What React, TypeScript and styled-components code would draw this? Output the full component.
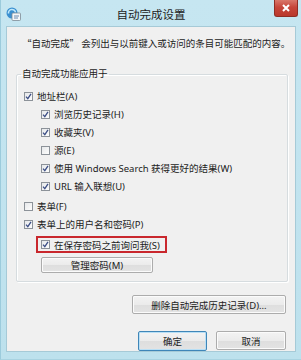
import React, { FC } from 'react';
import styled, { createGlobalStyle } from 'styled-components';

const GlobalStyle = createGlobalStyle`
  html, body {
    margin: 0;
    padding: 0;
    background: #bfe2ee;
  }
  body {
    font-family: "Noto Sans", "Noto Sans CJK SC", sans-serif;
    color: #1c1c1c;
  }
`;

const Window = styled.div`
  width: 301px;
  height: 360px;
  box-sizing: border-box;
  display: flex;
  flex-direction: column;
  background: linear-gradient(180deg, #c6e6f1 0%, #bde1ed 100%);
  border-left: 1px solid #9ccbdc;
  border-bottom: 1px solid #a9d3e1;
`;

const TitleBar = styled.div`
  height: 26px;
  display: grid;
  grid-template-columns: 1fr auto 1fr;
  align-items: start;
`;

const AppIcon = styled.svg`
  justify-self: start;
  margin: 7px 0 0 5px;
`;

const Title = styled.div`
  font-family: "Noto Sans CJK SC", sans-serif;
  font-size: 11.5px;
  line-height: 14px;
  margin-top: 7px;
  color: #222;
`;

const CloseButton = styled.div`
  justify-self: end;
  width: 24px;
  height: 17px;
  margin-right: 3px;
  display: flex;
  align-items: center;
  justify-content: center;
  background: linear-gradient(180deg, #d9776a 0%, #c7463a 45%, #b9382c 100%);
  border: 1px solid #8f2d24;
  border-top: none;
  border-radius: 0 0 3px 3px;
  box-sizing: border-box;
`;

const Client = styled.div`
  flex: 1;
  margin: 0 5px 7px 5px;
  background: #f0f0f0;
  border: 1px solid #a6cad7;
  display: flex;
  flex-direction: column;
  font-family: "Noto Sans", "Noto Sans CJK SC", sans-serif;
  font-size: 9.5px;
`;

const Description = styled.div`
  margin: 9px 0 0 15px;
  line-height: 14px;
  white-space: nowrap;
  font-family: "Noto Sans CJK SC", sans-serif;
`;

const Group = styled.fieldset`
  margin: 18px 7px 0 9px;
  padding: 7px 0 8px 0;
  border: 1px solid #d6dcdf;
  box-shadow: inset 1px 1px 0 #fff, 1px 1px 0 #fff;
  border-radius: 2px;
  display: flex;
  flex-direction: column;
`;

const Legend = styled.legend`
  margin-left: 4px;
  padding: 0 1px;
  line-height: 12px;
  font-size: 9.5px;
`;

const Row = styled.label<{ $indent: number; $gapTop?: number }>`
  display: flex;
  align-items: center;
  height: 18px;
  padding-left: ${(p) => 7 + p.$indent * 17}px;
  margin-top: ${(p) => p.$gapTop ?? 0}px;
  gap: 4px;
  white-space: nowrap;
`;

const Box = styled.span`
  width: 9px;
  height: 9px;
  box-sizing: border-box;
  border: 1px solid #8c9299;
  background: linear-gradient(135deg, #e6e8ea 0%, #fdfdfd 100%);
  display: flex;
  align-items: center;
  justify-content: center;
`;

const Highlight = styled.div`
  align-self: flex-start;
  margin: 3px 0 0 19px;
  border: 2px solid #c9272d;
  padding: 0 5px 0 3px;
  height: 17px;
  box-sizing: border-box;
  display: flex;
  align-items: center;
  gap: 4px;
  white-space: nowrap;
`;

const Button = styled.div<{ $width: number; $default?: boolean }>`
  width: ${(p) => p.$width}px;
  height: ${(p) => (p.$default ? 20 : 19)}px;
  box-sizing: border-box;
  display: flex;
  align-items: center;
  justify-content: center;
  border: 1px solid ${(p) => (p.$default ? '#3f86b8' : '#acacac')};
  border-radius: 2px;
  background: linear-gradient(180deg, #f3f3f3 0%, #ebebeb 50%, #dedede 51%, #e3e3e3 100%);
  box-shadow: inset 0 0 0 1px ${(p) => (p.$default ? '#b9dff5' : '#fbfbfb')};
  white-space: nowrap;
  font-size: 9.5px;
`;

const SmallButton = styled(Button)`
  height: 16px;
  margin: 4px 0 0 24px;
`;

const ButtonRow = styled.div<{ $top: number }>`
  display: flex;
  justify-content: flex-end;
  gap: 9px;
  margin: ${(p) => p.$top}px 9px 0 0;
`;

const Check: FC<{ on: boolean }> = ({ on }) => (
  <Box>
    {on && (
      <svg width="7" height="7" viewBox="0 0 7 7">
        <path d="M1 3.6 L2.8 5.6 L6 0.8" fill="none" stroke="#3d4f86" strokeWidth="1.3" />
      </svg>
    )}
  </Box>
);

const items: { text: string; on: boolean; indent: number; gapTop?: number }[] = [
  { text: '地址栏(A)', on: true, indent: 0 },
  { text: '浏览历史记录(H)', on: true, indent: 1 },
  { text: '收藏夹(V)', on: true, indent: 1 },
  { text: '源(E)', on: false, indent: 1 },
  { text: '使用 Windows Search 获得更好的结果(W)', on: true, indent: 1 },
  { text: 'URL 输入联想(U)', on: true, indent: 1 },
  { text: '表单(F)', on: false, indent: 0, gapTop: 2 },
  { text: '表单上的用户名和密码(P)', on: true, indent: 0 },
];

export default function App() {
  return (
    <Window>
      <GlobalStyle />
      <TitleBar>
        <AppIcon width="15" height="14" viewBox="0 0 15 14">
          <circle cx="6" cy="6" r="5.5" fill="#3a8fd0" />
          <path d="M2.5 6.5 a3.5 3.5 0 1 1 7 -1" fill="none" stroke="#bfe8fb" strokeWidth="1.6" />
          <rect x="6" y="6" width="8.5" height="7.5" rx="1" fill="#f4f6f8" stroke="#7c8a96" strokeWidth="0.8" />
          <path d="M8 9 h5 M8 11 h4" stroke="#5a80a8" strokeWidth="0.9" />
        </AppIcon>
        <Title>自动完成设置</Title>
        <CloseButton>
          <svg width="8" height="8" viewBox="0 0 8 8">
            <path d="M1 1 L7 7 M7 1 L1 7" stroke="#fff" strokeWidth="2" />
          </svg>
        </CloseButton>
      </TitleBar>
      <Client>
        <Description>“自动完成” 会列出与以前键入或访问的条目可能匹配的内容。</Description>
        <Group>
          <Legend>自动完成功能应用于</Legend>
          {items.map((item) => (
            <Row key={item.text} $indent={item.indent} $gapTop={item.gapTop}>
              <Check on={item.on} />
              {item.text}
            </Row>
          ))}
          <Highlight>
            <Check on />
            在保存密码之前询问我(S)
          </Highlight>
          <SmallButton $width={112}>管理密码(M)</SmallButton>
        </Group>
        <ButtonRow $top={13}>
          <Button $width={154}>删除自动完成历史记录(D)...</Button>
        </ButtonRow>
        <ButtonRow $top={17}>
          <Button $width={69} $default>
            确定
          </Button>
          <Button $width={70}>取消</Button>
        </ButtonRow>
      </Client>
    </Window>
  );
}
